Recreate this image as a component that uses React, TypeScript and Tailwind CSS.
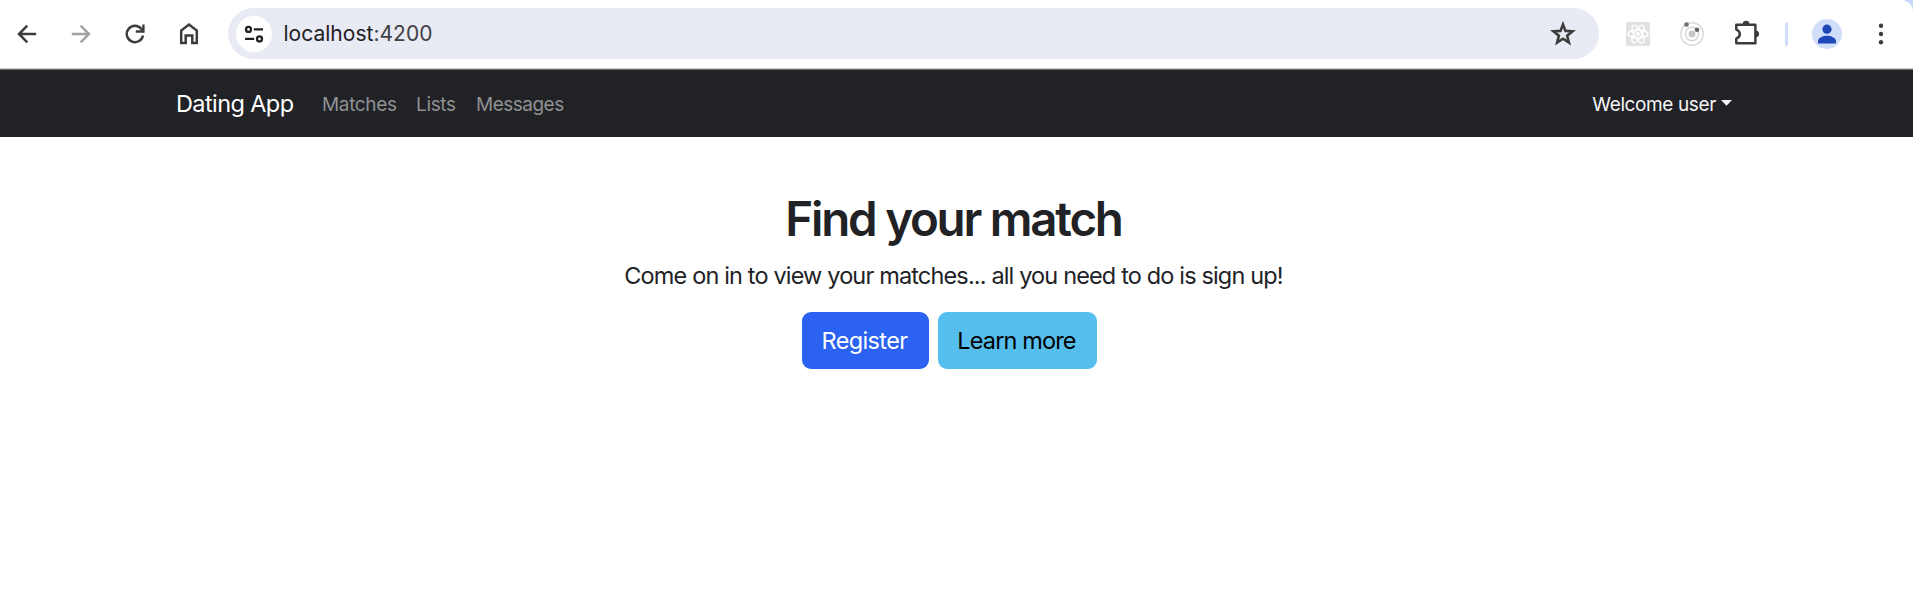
import type { ReactNode } from 'react';

type IconProps = { children: ReactNode; className?: string };

function Icon({ children, className = '' }: IconProps) {
  return (
    <svg width="30" height="30" viewBox="0 0 30 30" fill="none" className={`block shrink-0 ${className}`}>
      {children}
    </svg>
  );
}

function BrowserBar() {
  return (
    <header className="bg-[#c9d8fb]">
      <div className="flex h-[68px] items-start rounded-tr-[12px] bg-white text-[#3c3c3c]">
        <div className="flex items-center gap-6 pt-[18.5px] pl-3">
          <Icon>
            <path d="M24.2 15H8M15.3 6.7 7 15l8.3 8.3" stroke="currentColor" strokeWidth="2.5" />
          </Icon>
          <Icon className="text-[#a2a2a2]">
            <path d="M5.8 15H22M14.7 6.7 23 15l-8.3 8.3" stroke="currentColor" strokeWidth="2.5" />
          </Icon>
          <Icon>
            <path d="M23 16.5A8.2 8.2 0 1 1 21.4 9.9L23.2 12" stroke="currentColor" strokeWidth="2.4" />
            <path d="M23.4 5.6v6.9h-7.6" stroke="currentColor" strokeWidth="2.4" />
          </Icon>
          <Icon>
            <path
              d="M7.2 24.1V11.6L15 5.6l7.8 6v12.5h-4.5v-7.6h-6.6v7.6z"
              stroke="currentColor"
              strokeWidth="2.5"
            />
          </Icon>
        </div>
        <div className="mt-2 ml-[24px] flex h-[51px] w-[1371px] items-center rounded-full bg-[#e8eaf4] pr-[21px] pl-[7.5px]">
          <span className="flex size-9 items-center justify-center rounded-full bg-white text-[#202124]">
            <Icon>
              <g stroke="currentColor" strokeWidth="2.3">
                <circle cx="9.5" cy="10.4" r="2.5" />
                <path d="M14.8 10.4H24M6 19.9h9.2" />
                <circle cx="20.5" cy="19.9" r="2.5" />
              </g>
            </Icon>
          </span>
          <span className="ml-[12px] text-[21px] leading-none tracking-[0.02px] text-[#1f2023]">
            localhost<span className="text-[#404145]">:4200</span>
          </span>
          <Icon className="ml-auto">
            <path
              d="M15 5.4l2.5 6.5 7 .4-5.4 4.4 1.8 6.8L15 19.7l-5.9 3.8 1.8-6.8-5.4-4.4 7-.4z"
              stroke="currentColor"
              strokeWidth="2.6"
            />
          </Icon>
        </div>
        <div className="flex items-center pt-[18.5px] pl-[24px]">
          <Icon>
            <rect x="3" y="3" width="24" height="24" rx="1.5" fill="#e1e1e1" />
            <g stroke="#fff" strokeWidth="1.4">
              <ellipse cx="15" cy="15" rx="10" ry="3.9" />
              <ellipse cx="15" cy="15" rx="10" ry="3.9" transform="rotate(60 15 15)" />
              <ellipse cx="15" cy="15" rx="10" ry="3.9" transform="rotate(120 15 15)" />
            </g>
            <circle cx="15" cy="15" r="2" fill="#fff" />
          </Icon>
          <Icon className="ml-6">
            <circle cx="15" cy="15" r="11.2" stroke="#d9d9d9" strokeWidth="1.4" />
            <circle cx="15" cy="15" r="6.7" stroke="#d4d4d4" strokeWidth="1.4" />
            <circle cx="15" cy="15" r="3.4" fill="#c8c8c8" />
            <circle cx="9.5" cy="5.5" r="2.3" fill="#707070" />
            <circle cx="20" cy="10.7" r="2.3" fill="#646464" />
          </Icon>
          <Icon className="ml-[25px]">
            <path
              d="M4.3 5.8H23.4V24.2H4.3V19.6C9 18 9 12.2 4.3 10.6z"
              stroke="currentColor"
              strokeWidth="2.5"
              strokeLinejoin="round"
            />
            <path d="M10.8 5a3.3 3.3 0 0 1 6.6 0zM24 11.8a3.1 3.1 0 0 1 0 6.2z" fill="currentColor" />
          </Icon>
          <span className="ml-[23px] h-6 w-[3px] rounded-full bg-[#d1defa]" />
          <Icon className="ml-[24px]">
            <circle cx="15" cy="15" r="15" fill="#d1defa" />
            <circle cx="15" cy="10.2" r="4.6" fill="#1f47b8" />
            <path d="M6 24.4v-2.3c0-3.5 5-5.4 9-5.4s9 1.9 9 5.4v2.3z" fill="#1f47b8" />
          </Icon>
          <Icon className="ml-6">
            <g fill="currentColor">
              <circle cx="15" cy="6.8" r="2.2" />
              <circle cx="15" cy="15" r="2.2" />
              <circle cx="15" cy="23.2" r="2.2" />
            </g>
          </Icon>
        </div>
      </div>
    </header>
  );
}

function Navbar() {
  return (
    <nav className="flex h-[69px] items-center border-t border-[#c6c8c6] bg-[#212226] pt-[3px] pr-[181px] pl-[176px] shadow-[inset_0_1px_0_#6f7170]">
      <a className="w-[146px] pb-[2px] text-[23.5px] leading-none tracking-[-0.6px] whitespace-nowrap text-white">
        Dating App
      </a>
      <div className="flex flex-1 text-[19px] leading-none tracking-[-0.35px] whitespace-nowrap text-[#909193]">
        <a className="w-[94px]">Matches</a>
        <a className="w-[60px]">Lists</a>
        <a className="tracking-[-0.5px]">Messages</a>
      </div>
      <a className="flex items-center text-[19px] leading-none tracking-[-0.38px] whitespace-nowrap text-[#f4f4f5]">
        Welcome user
        <svg width="11" height="6" viewBox="0 0 11 6" className="mb-[3px] ml-[5px]">
          <path d="M0 0h11L5.5 5.8z" fill="currentColor" />
        </svg>
      </a>
    </nav>
  );
}

export default function App() {
  return (
    <div className="h-[592px] overflow-hidden bg-white font-['Inter',sans-serif]">
      <BrowserBar />
      <Navbar />
      <main className="flex flex-col items-center pt-[53px] pr-[6px] text-[#212226]">
        <h1 className="text-[47.5px] leading-[58px] font-semibold tracking-[-2.25px] whitespace-nowrap">
          Find your match
        </h1>
        <p className="mt-[12px] text-[23.5px] leading-[32px] tracking-[-0.85px] whitespace-nowrap">
          Come on in to view your matches... all you need to do is sign up!
        </p>
        <div className="mt-[20px] mr-[8px] flex gap-[9px] text-[23.5px]">
          <button className="h-[57px] w-[127px] rounded-[9px] bg-[#2b62f1] pr-[2px] tracking-[-0.65px] whitespace-nowrap text-white">
            Register
          </button>
          <button className="h-[57px] w-[159px] rounded-[9px] bg-[#55beec] pr-[2px] tracking-[-0.85px] whitespace-nowrap text-black">
            Learn more
          </button>
        </div>
      </main>
    </div>
  );
}
